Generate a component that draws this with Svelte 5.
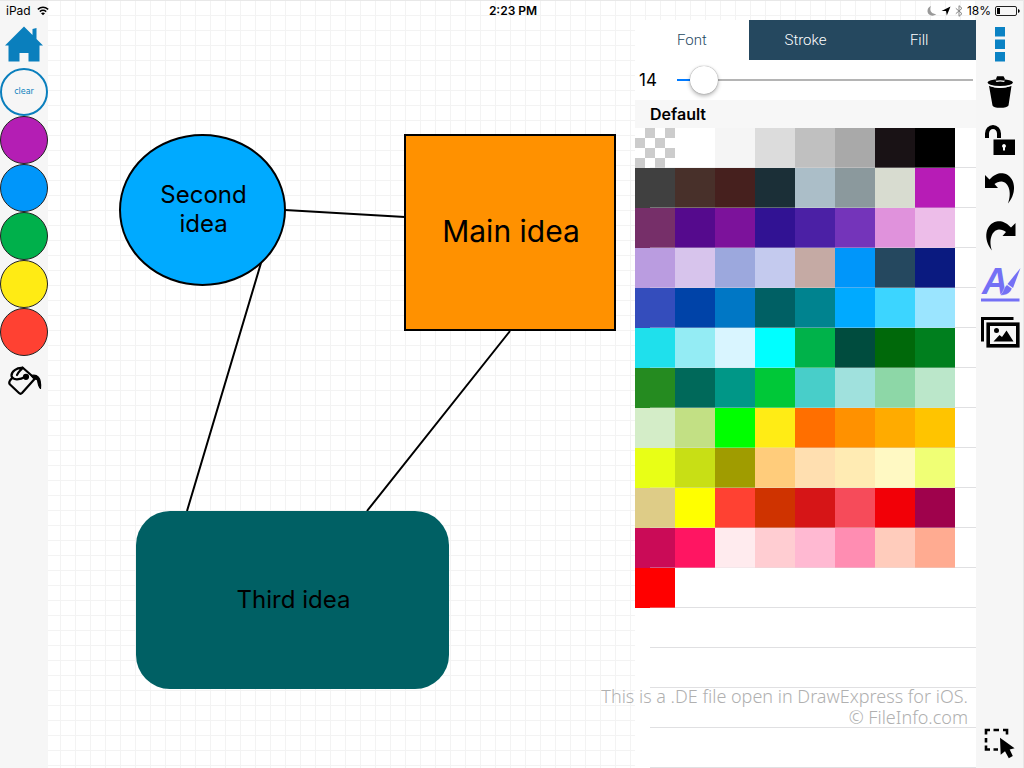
<script>
  const quickColors = [
    ['Purple', '#b41eb4'],
    ['Blue', '#0096fa'],
    ['Green', '#00b04b'],
    ['Yellow', '#ffeb14'],
    ['Red', '#ff4132']
  ];

  const palette = [
    ['transparent', '#ffffff', '#f5f5f5', '#dcdcdc', '#c0c0c0', '#a9a9a9', '#191215', '#000000'],
    ['#404040', '#48302a', '#46201e', '#1b2f37', '#abbec8', '#8b999d', '#d8dcd0', '#b71cb6'],
    ['#762f69', '#550a8d', '#7c129b', '#311293', '#4b20a5', '#7434ba', '#e092dc', '#edbde9'],
    ['#ba9ce0', '#d7c4ec', '#9ca8dd', '#c4caee', '#c5aaa4', '#0096fa', '#25485f', '#0a1a80'],
    ['#344dbc', '#0043a8', '#0077c5', '#006064', '#00838f', '#00aaff', '#3cd5ff', '#9be5ff'],
    ['#1fe0ec', '#94ecf4', '#d9f5ff', '#00ffff', '#00b24a', '#004c3e', '#00690a', '#007f1e'],
    ['#258b20', '#00695a', '#009787', '#00c838', '#48cec9', '#a0e1dd', '#8dd7a7', '#bbe7ca'],
    ['#d4edc8', '#c2e084', '#00ff00', '#ffec15', '#ff6f00', '#ff9100', '#ffab00', '#ffc400'],
    ['#e8ff16', '#c8df15', '#a09c00', '#ffcc7b', '#ffdfb0', '#ffebb3', '#fff9c3', '#f0ff75'],
    ['#decc87', '#ffff00', '#ff4132', '#cf3300', '#d61517', '#f64b5a', '#f20007', '#9f024c'],
    ['#ca0b57', '#ff1562', '#ffebee', '#ffcdd2', '#ffb9d2', '#ff8db2', '#ffccbc', '#ffab91'],
    ['#ff0000']
  ];

  const tabs = ['Font', 'Stroke', 'Fill'];
  const min = 8;
  const max = 132;
  let active = $state('Font');
  let size = $state(14);
  let ratio = $derived((size - min) / (max - min));
</script>

<div class="app">
  <header class="status">
    <div class="device">
      <span>iPad</span>
      <svg width="12" height="10" viewBox="0 0 12 10" fill="none" stroke="#000" stroke-width="1.4" aria-hidden="true">
        <path d="M.8 3.4Q6-.9 11.2 3.4M2.8 5.6Q6 3 9.2 5.6" />
        <path d="M6 9.2 4 7.2Q6 5.8 8 7.2Z" fill="#000" stroke="none" />
      </svg>
    </div>
    <time>2:23 PM</time>
    <div class="indicators">
      <svg width="10" height="12" viewBox="0 0 10 12" aria-hidden="true"><path d="M4 1C2 5 4 9 9.300 9 5.500 12.500.3 10 .5 5.800.7 3.300 2 1.700 4 1Z" fill="#999" /></svg>
      <svg width="10" height="10" viewBox="0 0 10 10" aria-hidden="true"><path d="M9.500.5 5.800 9.500 5 5H.5Z" fill="#000" /></svg>
      <svg width="8" height="12" viewBox="0 0 8 12" fill="none" stroke="#888" aria-hidden="true"><path d="M.8 3.300 7 8.700 4 11.300V.7L7 3.300.8 8.700" /></svg>
      <span>18%</span>
      <svg width="25" height="10" viewBox="0 0 25 10" aria-hidden="true">
        <rect x=".5" y=".5" width="21" height="9" rx="1.500" fill="none" stroke="#222" />
        <path d="M2 2h3v6H2ZM23 3q1.800.5 1.800 2T23 7Z" fill="#000" />
      </svg>
    </div>
  </header>

  <nav class="toolbar" aria-label="Colours">
    <button class="tool" aria-label="Home">
      <svg viewBox="0 0 48 48" fill="#0a7fbd"><path d="M24 6.500 32.500 15V9L36.500 8V19L43 25.500H39.500V41.500H28.500V33H19.500V41.500H8.500V25.500H5Z" /></svg>
    </button>
    <button class="dot clear">clear</button>
    {#each quickColors as [name, color]}
      <button class="dot" style:background={color} aria-label={name}></button>
    {/each}
    <button class="tool" aria-label="Fill bucket">
      <svg viewBox="0 0 48 48" fill="none" stroke="#000" stroke-width="2.200" stroke-linejoin="round" stroke-linecap="round">
        <path d="M22.500 11.500 35 22.500 22 37Q20.500 38.500 19 37L10 28.500Q8.500 27 10 24.500L12.500 21.500" />
        <path d="M25.500 20.800C20 24 12.500 24.500 11.500 20 11 15.500 17 11.500 22.500 12 20 15 18 16 17 19" />
        <circle cx="26" cy="20.800" r="2" fill="#000" />
        <path d="M31 19.500C37 18 41.500 21 40.500 32.500 38.500 31 38 27 37.500 24L33 22Z" fill="#000" stroke-width="1.200" />
      </svg>
    </button>
  </nav>

  <main class="canvas">
    <svg class="links" aria-hidden="true" stroke="#000" stroke-width="2">
      <path d="M237 210 357 217M213 263 139 511M462 331 319 511" />
    </svg>
    <div class="node second">Second<br />idea</div>
    <div class="node primary">Main idea</div>
    <div class="node third">Third idea</div>
  </main>

  <aside class="panel">
    <div class="tabs" role="tablist">
      {#each tabs as tab}
        <button role="tab" aria-selected={active === tab} class:active={active === tab} onclick={() => (active = tab)}>{tab}</button>
      {/each}
    </div>
    <div class="size">
      <label for="size">{size}</label>
      <input id="size" type="range" {min} {max} bind:value={size} style:--ratio={ratio} />
    </div>
    <h2>Default</h2>
    <div class="palette">
      {#each palette as row}
        <div class="row">
          {#each row as color}
            <button class="swatch" class:checker={color === 'transparent'} style:background-color={color} aria-label={color}></button>
          {/each}
        </div>
      {/each}
    </div>
  </aside>

  <nav class="toolbar right" aria-label="Tools">
    <button class="tool" aria-label="Menu">
      <svg viewBox="0 0 48 48" fill="#0a82c4"><path d="M19 7h10v9.500H19ZM19 19.500h10v9.500H19ZM19 32h10v9.500H19Z" /></svg>
    </button>
    <button class="tool" aria-label="Delete">
      <svg viewBox="0 0 48 48">
        <path d="M20 11 21 8.200H27.500L29 11 27.500 12.500H21Z" />
        <path d="M11.500 14.500Q12 11.500 24 11.300 36.500 11.500 37 14.500 36 17.700 24 18 12.500 17.700 11.500 14.500Z" />
        <path d="M19.500 12.800Q24 11.800 29 12.800L28 14Q24 13.200 20.500 14Z" fill="#f6f6f6" />
        <path d="M13 17.800Q24 22.300 35.500 17.800L32.500 37.500Q31 39.800 24.200 39.800 17.500 39.800 16.500 37.500Z" />
        <path d="M12.500 17.300Q24 21.500 36 17.300" fill="none" stroke="#f6f6f6" stroke-width="1.200" />
      </svg>
    </button>
    <button class="tool" aria-label="Unlock">
      <svg viewBox="0 0 48 48">
        <path d="M11 22V17.500A6 6.500 0 0 1 23 17.500V22" fill="none" stroke="#000" stroke-width="4" />
        <path d="M17.500 23.500H39V39H17.500Z" />
        <path d="M28 28a2 2 0 0 1 1 3.700V34.500H27V31.700A2 2 0 0 1 28 28Z" fill="#fff" />
      </svg>
    </button>
    <button class="tool" aria-label="Undo">
      <svg viewBox="0 0 48 48"><path d="M9 11 13.500 15.500C19 9.500 24 8.500 28 9.500 39 12 42 28 32 39.500 36 29 33 18 25.500 17.500 22.500 17.500 20.500 18.500 18.500 20L22 24H9Z" /></svg>
    </button>
    <button class="tool" aria-label="Redo">
      <svg viewBox="0 0 48 48"><path transform="translate(48.500 0) scale(-1 1)" d="M9 11 13.500 15.500C19 9.500 24 8.500 28 9.500 39 12 42 27 32.500 38.500 36 29 33 18 25.500 17.500 22.500 17.500 20.500 18.500 18.500 20L22 24H9Z" /></svg>
    </button>
    <button class="tool" aria-label="Text style">
      <svg viewBox="0 0 48 48" fill="#7470f5">
        <text class="letter" x="6" y="34">A</text>
        <path d="M44.500 8 37 28 31.500 24Z" />
        <path d="M31 24.800 36 28.600C34 34 29 35.800 24 35 28 33 27 27.500 31 24.800Z" stroke="#f6f6f6" stroke-width=".4" />
        <path d="M5 38.500H43.500V41.500H5Z" />
      </svg>
    </button>
    <button class="tool" aria-label="Images">
      <svg viewBox="0 0 48 48">
        <path d="M6.500 33.500V10.500H37.500" fill="none" stroke="#000" stroke-width="3" />
        <rect x="12.200" y="16.200" width="29.600" height="21.600" fill="none" stroke="#000" stroke-width="3.600" />
        <circle cx="20.500" cy="22.500" r="2.500" />
        <path d="M17.500 33.500 23.500 27 26 29 30.500 22.500 37.500 33.500Z" />
      </svg>
    </button>
    <button class="tool last" aria-label="Select area">
      <svg viewBox="0 0 48 48">
        <path d="M10 14.500V10H14M17.500 10H23M27 10H31V14.500M10 18V22.500M10 25.500V29.500H14M17.500 29.500H22" fill="none" stroke="#000" stroke-width="2.600" />
        <path d="M24 17.700 38.600 28.200 33.700 29.500 36.800 36 32.800 38.200 29 31.200 24.700 34.800Z" />
      </svg>
    </button>
  </nav>

  <p class="credit">This is a .DE file open in DrawExpress for iOS.<br />© FileInfo.com</p>
</div>

<style>
  :global(body) {
    margin: 0;
  }
  .app {
    position: relative;
    display: grid;
    grid-template-columns: 48px 1fr minmax(335px, 341px) 48px;
    min-height: 100vh;
    overflow: hidden;
    font-family: Inter, sans-serif;
    color: #000;
    background-color: #fff;
    background-image: linear-gradient(to right, #f3f3f3 1px, transparent 1px),
      linear-gradient(#f3f3f3 1px, transparent 1px);
    background-size: 15px 15px;
  }
  button {
    margin: 0;
    padding: 0;
    border: 0;
    background: none;
    font: inherit;
    color: inherit;
    cursor: pointer;
  }
  svg {
    display: block;
  }
  .status {
    position: absolute;
    inset: 0 0 auto;
    z-index: 2;
    box-sizing: border-box;
    display: grid;
    grid-template-columns: 1fr auto 1fr;
    align-items: center;
    height: 20px;
    padding: 0 4px 0 6px;
    font-size: 12px;
    border-top: 1px solid #e8e8e8;
  }
  .device,
  .indicators {
    display: flex;
    align-items: center;
    gap: 6px;
  }
  .indicators {
    justify-content: flex-end;
    gap: 4px;
  }
  time {
    font-weight: 600;
  }
  .toolbar {
    display: flex;
    flex-direction: column;
    padding-top: 20px;
    background: #f6f6f6;
  }
  .right {
    box-shadow: inset -1px 0 #e8e8e8;
  }
  .tool {
    width: 48px;
    height: 48px;
  }
  .last {
    margin-top: auto;
  }
  .letter {
    font: italic 700 36px "Liberation Sans", sans-serif;
  }
  .dot {
    box-sizing: border-box;
    width: 48px;
    height: 48px;
    border: 1px solid #222;
    border-radius: 50%;
  }
  .clear {
    border: 2px solid #0a7fbd;
    padding-bottom: 2px;
    font: 8px "DejaVu Sans", sans-serif;
    color: #0a7fbd;
  }
  .canvas {
    position: relative;
  }
  .links {
    position: absolute;
    width: 100%;
    height: 100%;
  }
  .node {
    position: absolute;
    box-sizing: border-box;
    display: flex;
    align-items: center;
    justify-content: center;
    padding: 0 0 2px 2px;
    text-align: center;
    font-size: 24px;
    line-height: 29px;
  }
  .second {
    left: 71px;
    top: 134px;
    width: 167px;
    height: 152px;
    border: 2px solid #000;
    border-radius: 50%;
    background: #00aaff;
  }
  .primary {
    left: 356px;
    top: 134px;
    width: 212px;
    height: 197px;
    border: 2px solid #000;
    background: #ff9100;
    font-size: 30px;
  }
  .third {
    left: 88px;
    top: 511px;
    width: 313px;
    height: 178px;
    border-radius: 34px;
    background: #006064;
  }
  .panel {
    display: flex;
    flex-direction: column;
    margin-top: 20px;
    background: #fff;
  }
  .tabs {
    display: grid;
    grid-template-columns: repeat(3, 1fr);
    height: 40px;
    font: 300 15px Roboto, sans-serif;
  }
  .tabs button {
    background: #25485f;
    color: #fff;
  }
  .tabs button.active {
    background: #fff;
    color: #25485f;
  }
  .size {
    display: flex;
    align-items: center;
    height: 40px;
    padding: 0 3px 0 4px;
  }
  .size label {
    flex: none;
    width: 38px;
    font-size: 17px;
  }
  input {
    --fill: calc(14px + (100% - 28px) * var(--ratio));
    appearance: none;
    flex: 1;
    min-width: 0;
    height: 28px;
    margin: 0;
    background: linear-gradient(to right, #007aff var(--fill), #b4b4b4 var(--fill)) center / 100% 2px no-repeat;
  }
  input::-webkit-slider-thumb {
    appearance: none;
    width: 28px;
    height: 28px;
    border-radius: 50%;
    background: #fff;
    box-shadow: 0 0 1px rgb(0 0 0 / 50%), 0 2px 4px rgb(0 0 0 / 30%);
  }
  h2 {
    margin: 0;
    padding-left: 15px;
    font-size: 16px;
    font-weight: 600;
    line-height: 28px;
    background: #f7f7f7;
  }
  .palette {
    flex: 1;
    background: linear-gradient(transparent 39px, #e0e0e2 39px) 15px 0 / 100% 40px repeat-y;
  }
  .row {
    position: relative;
    display: flex;
    height: 40px;
  }
  .row::after {
    content: "";
    position: absolute;
    inset: auto 0 0 15px;
    height: 1px;
    background: rgb(224 224 226 / 35%);
    pointer-events: none;
  }
  .swatch {
    width: 40px;
    height: 40px;
  }
  .checker {
    background: conic-gradient(#ccc 25%, #fff 0 50%, #ccc 0 75%, #fff 0) 0 0 / 20px 20px;
  }
  .credit {
    position: absolute;
    right: 56px;
    bottom: 40px;
    margin: 0;
    font: 300 18px/21px "Noto Sans", sans-serif;
    text-align: right;
    color: #b0b0b0;
    pointer-events: none;
  }
</style>
